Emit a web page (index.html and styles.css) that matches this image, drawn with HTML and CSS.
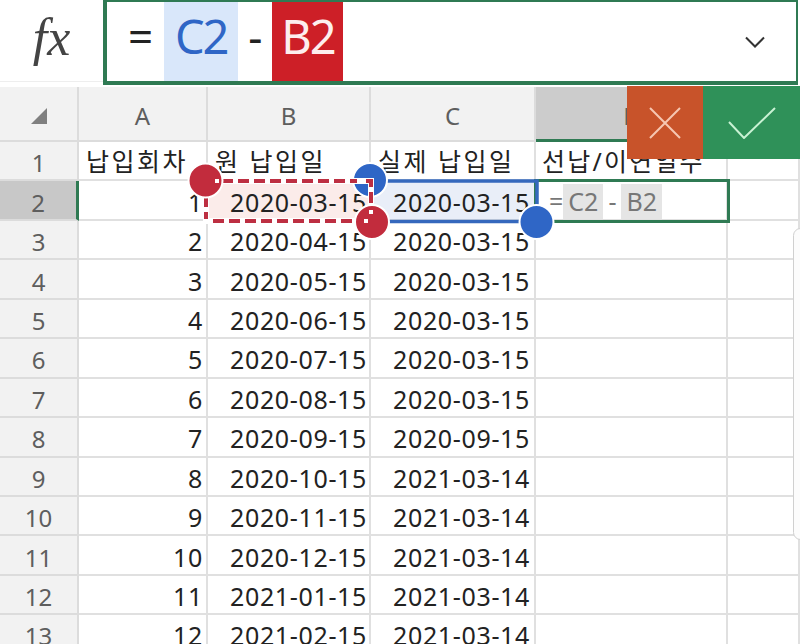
FILE: index.html
```html
<!DOCTYPE html>
<html lang="ko">
<head>
<meta charset="utf-8">
<title>수식 편집</title>
<link rel="stylesheet" href="styles.css">
</head>
<body>
<header class="bar">
  <div class="fx">fx</div>
  <div class="formula">
    <span class="op eq">=</span>
    <span class="tok tok-c">C2</span>
    <span class="op minus">-</span>
    <span class="tok tok-b">B2</span>
    <svg class="chev" width="22" height="14" viewBox="0 0 22 14"><path d="M2 2.500L11 11.500L20 2.500" fill="none" stroke="#333" stroke-width="2"/></svg>
  </div>
</header>
<main class="sheet">
  <div class="h corner"><svg width="18" height="18" viewBox="0 0 18 18"><path d="M17 1V17H1Z" fill="#808080"/></svg></div>
  <div class="h">A</div><div class="h">B</div><div class="h">C</div><div class="h h-active">D</div><div class="h"></div>

  <div class="g">1</div><div class="c t">납입회차</div><div class="c t">원 납입일</div><div class="c t">실제 납입일</div><div class="c t t-d">선납/이연일수</div><div class="c"></div>
  <div class="g g-active">2</div><div class="c n">1</div><div class="c n d ref-b">2020-03-15</div><div class="c n d2 ref-c">2020-03-15</div>
  <div class="c edit"><span class="p">=</span><span class="r">C2</span><span class="p">-</span><span class="r">B2</span></div><div class="c"></div>
  <div class="g">3</div><div class="c n">2</div><div class="c n d">2020-04-15</div><div class="c n d2">2020-03-15</div><div class="c"></div><div class="c"></div>
  <div class="g">4</div><div class="c n">3</div><div class="c n d">2020-05-15</div><div class="c n d2">2020-03-15</div><div class="c"></div><div class="c"></div>
  <div class="g">5</div><div class="c n">4</div><div class="c n d">2020-06-15</div><div class="c n d2">2020-03-15</div><div class="c"></div><div class="c"></div>
  <div class="g">6</div><div class="c n">5</div><div class="c n d">2020-07-15</div><div class="c n d2">2020-03-15</div><div class="c"></div><div class="c"></div>
  <div class="g">7</div><div class="c n">6</div><div class="c n d">2020-08-15</div><div class="c n d2">2020-03-15</div><div class="c"></div><div class="c"></div>
  <div class="g">8</div><div class="c n">7</div><div class="c n d">2020-09-15</div><div class="c n d2">2020-09-15</div><div class="c"></div><div class="c"></div>
  <div class="g">9</div><div class="c n">8</div><div class="c n d">2020-10-15</div><div class="c n d2">2021-03-14</div><div class="c"></div><div class="c"></div>
  <div class="g">10</div><div class="c n">9</div><div class="c n d">2020-11-15</div><div class="c n d2">2021-03-14</div><div class="c"></div><div class="c"></div>
  <div class="g">11</div><div class="c n">10</div><div class="c n d">2020-12-15</div><div class="c n d2">2021-03-14</div><div class="c"></div><div class="c"></div>
  <div class="g">12</div><div class="c n">11</div><div class="c n d">2021-01-15</div><div class="c n d2">2021-03-14</div><div class="c"></div><div class="c"></div>
  <div class="g">13</div><div class="c n">12</div><div class="c n d">2021-02-15</div><div class="c n d2">2021-03-14</div><div class="c"></div><div class="c"></div>
</main>

<svg class="marks" width="800" height="644" viewBox="0 0 800 644">
  <path d="M370 181H537V221.500H370" fill="none" stroke="#3568bd" stroke-width="3.500"/>
  <circle cx="370" cy="180" r="17" fill="#2f66c6" stroke="#fff" stroke-width="2"/>
  <rect x="206" y="181" width="165" height="40" fill="none" stroke="#fff" stroke-width="6"/>
  <rect x="206" y="181" width="165" height="40" fill="none" stroke="#bd2f42" stroke-width="4" stroke-dasharray="11 5"/>
  <circle cx="205.500" cy="180.500" r="17" fill="#c22c3d" stroke="#fff" stroke-width="2"/>
  <circle cx="372" cy="222" r="17" fill="#c22c3d" stroke="#fff" stroke-width="2"/>
  <circle cx="536.500" cy="222" r="17" fill="#2f66c6" stroke="#fff" stroke-width="2"/>
  <g fill="#fff">
    <rect x="215" y="179" width="4" height="4"/>
    <rect x="357" y="179" width="4" height="4"/>
    <rect x="369" y="210" width="4" height="4"/>
    <rect x="364" y="219" width="4" height="4"/>
    <rect x="204" y="219" width="4" height="4"/>
  </g>
</svg>

<div class="actions">
  <div class="btn btn-x"><svg width="32" height="32" viewBox="0 0 32 32"><path d="M1 1L31 31M31 1L1 31" fill="none" stroke="#f6c7b2" stroke-width="2"/></svg></div>
  <div class="btn btn-ok"><svg width="48" height="32" viewBox="0 0 48 32"><path d="M1 15L16 31L47 1" fill="none" stroke="#c9f2d4" stroke-width="2"/></svg></div>
</div>
<div class="scroll"></div>
</body>
</html>
```

FILE: styles.css
```css
* { box-sizing: border-box; }
html, body { margin: 0; height: 100%; }
body {
  position: relative;
  width: 800px;
  height: 644px;
  overflow: hidden;
  background: #fff;
  font-family: "Noto Sans", "Noto Sans CJK KR", sans-serif;
  color: #222;
}

/* Formula bar */
.bar { display: flex; height: 87px; align-items: flex-start; }
.fx {
  width: 103px;
  height: 82px;
  border-bottom: 1px solid #eee;
  display: flex;
  align-items: center;
  justify-content: center;
  font-family: "Liberation Serif", serif;
  font-style: italic;
  font-size: 52px;
  color: #444;
  padding: 0 0 6px 0;
}
.formula {
  flex: 1;
  height: 85px;
  margin-right: 2px;
  border: solid #2f7a53;
  border-width: 2px 2px 4px 4px;
  display: flex;
  align-items: stretch;
  padding-left: 21px;
  font-size: 47px;
  line-height: 68px;
}
.op { color: #222; font-size: 44px; }
.eq { margin-right: 11px; }
.minus { margin: 0 10px; }
.tok { text-align: center; letter-spacing: -2px; }
.tok-c { width: 74px; background: #d9e7fa; color: #2f66c6; }
.tok-b { width: 71px; background: #cd1f27; color: #fdeeee; }
.chev { margin: 33px 30px 0 auto; }

/* Sheet */
.sheet {
  display: grid;
  grid-template-columns: 79px 129px 163px 165px 192px 72px;
  grid-template-rows: 55px repeat(13, 39.45px);
  font-size: 25px;
  line-height: 1;
}
.h, .g {
  background: #f2f2f2;
  color: #5e5e5e;
  display: flex;
  align-items: center;
  justify-content: center;
  border-right: 2px solid #dcdcdc;
  border-bottom: 2px solid #dcdcdc;
  font-size: 24px;
}
.h { padding-top: 5px; }
.g { padding-top: 5px; }
.corner { padding: 4px 0 0 0; }
.h-active { background: #ccc; border-bottom: 3px solid #2f7a53; border-right: none; }
.g-active { background: #c8c8c8; border-right: 3px solid #2f7a53; }
.c {
  border-right: 2px solid #e0e0e0;
  border-bottom: 2px solid #e0e0e0;
  display: flex;
  align-items: center;
  padding-top: 4px;
  white-space: nowrap;
  min-width: 0;
}
.t { padding-left: 7px; padding-top: 1px; letter-spacing: 2.5px; }
.t-d { padding-left: 6px; letter-spacing: 2.2px; }
.n { justify-content: flex-end; padding-right: 3px; letter-spacing: .65px; }
.d { padding-right: 2px; }
.d2 { padding-right: 4px; }
.ref-b { background: #fbecea; }
.ref-c { background: #e9eef8; }
.edit {
  position: relative;
  z-index: 1;
  align-items: stretch;
  padding: 3px 0 0 13px;
  outline: 3px solid #2f7a53;
  outline-offset: -1px;
  background: #fff;
  color: #777;
  font-size: 25px;
}
.edit .p { display: flex; align-items: center; margin: 0 5px; }
.edit .p:first-child { margin: 0; }
.edit .r { display: flex; align-items: center; padding: 0 5px; background: #e5e5e5; }

/* Overlays */
.marks { position: absolute; left: 0; top: 0; z-index: 2; pointer-events: none; }
.actions {
  position: absolute;
  top: 86px;
  right: 0;
  z-index: 3;
  display: flex;
  height: 73px;
}
.btn { display: flex; align-items: center; justify-content: center; }
.btn-x { width: 76px; background: #c8532a; }
.btn-ok { width: 97px; background: #2f9159; }
.scroll {
  position: absolute;
  top: 228px;
  right: -8px;
  width: 15px;
  height: 312px;
  border: 1px solid #d0d0d0;
  border-radius: 8px;
  background: #fcfcfc;
  z-index: 2;
}
```
